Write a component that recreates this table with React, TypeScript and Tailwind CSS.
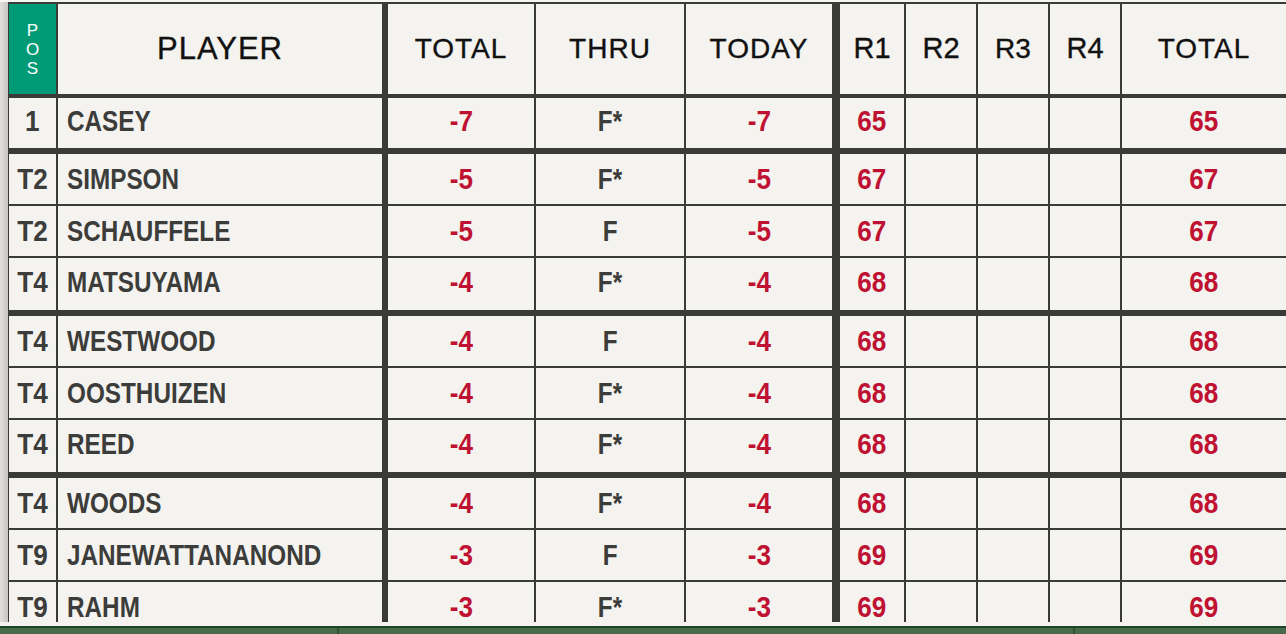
import React from "react";

type Row = {
  pos: string;
  name: string;
  total: string;
  thru: string;
  today: string;
  r1: string;
  sum: string;
  groupEnd?: boolean;
};

const ROWS: Row[] = [
  { pos: "1", name: "CASEY", total: "-7", thru: "F*", today: "-7", r1: "65", sum: "65", groupEnd: true },
  { pos: "T2", name: "SIMPSON", total: "-5", thru: "F*", today: "-5", r1: "67", sum: "67" },
  { pos: "T2", name: "SCHAUFFELE", total: "-5", thru: "F", today: "-5", r1: "67", sum: "67" },
  { pos: "T4", name: "MATSUYAMA", total: "-4", thru: "F*", today: "-4", r1: "68", sum: "68", groupEnd: true },
  { pos: "T4", name: "WESTWOOD", total: "-4", thru: "F", today: "-4", r1: "68", sum: "68" },
  { pos: "T4", name: "OOSTHUIZEN", total: "-4", thru: "F*", today: "-4", r1: "68", sum: "68" },
  { pos: "T4", name: "REED", total: "-4", thru: "F*", today: "-4", r1: "68", sum: "68", groupEnd: true },
  { pos: "T4", name: "WOODS", total: "-4", thru: "F*", today: "-4", r1: "68", sum: "68" },
  { pos: "T9", name: "JANEWATTANANOND", total: "-3", thru: "F", today: "-3", r1: "69", sum: "69" },
  { pos: "T9", name: "RAHM", total: "-3", thru: "F*", today: "-3", r1: "69", sum: "69" },
];

// Column boxes: width includes the right-hand rule
const COL = {
  pos: "w-[49px] border-r-2",
  player: "w-[330px] border-r-[6px]",
  total: "w-[148px] border-r-2",
  thru: "w-[150px] border-r-2",
  today: "w-[154px] border-r-[8px]",
  r1: "w-[66px] border-r-2",
  r: "w-[72px] border-r-2",
  sum: "flex-1",
};

const cell = "h-full shrink-0 border-[#3a3a38] flex items-center justify-center";
const headFont =
  "font-['Liberation_Sans',Arial,sans-serif] text-[28px] tracking-[1px] text-[#111] [-webkit-text-stroke:0.35px_#111]";
const bodyFont = "font-['Liberation_Sans',Arial,sans-serif] font-bold text-[30px] leading-none";

// condensed look: Arial bold squeezed like Arial Narrow
function Narrow({ children, left }: { children: React.ReactNode; left?: boolean }) {
  return (
    <span className={`inline-block whitespace-nowrap scale-x-[0.81] ${left ? "origin-left" : "origin-center"}`}>
      {children}
    </span>
  );
}

function Num({ children }: { children: React.ReactNode }) {
  return <span className="inline-block whitespace-nowrap scale-x-[0.87] origin-center">{children}</span>;
}

function Header() {
  return (
    <div className="flex h-[94px] shrink-0 border-b-4 border-[#3a3a38]">
      <div className={`${cell} ${COL.pos} bg-[#009b76]`}>
        <div className="flex flex-col items-center font-['Liberation_Sans',Arial,sans-serif] text-[17px] leading-[19px] text-white">
          <span>P</span>
          <span>O</span>
          <span>S</span>
        </div>
      </div>
      <div className={`${cell} ${COL.player} ${headFont} text-[31px]`}>PLAYER</div>
      <div className={`${cell} ${COL.total} ${headFont}`}>TOTAL</div>
      <div className={`${cell} ${COL.thru} ${headFont}`}>THRU</div>
      <div className={`${cell} ${COL.today} ${headFont}`}>TODAY</div>
      <div className={`${cell} ${COL.r1} ${headFont} tracking-normal text-[29px]`}>R1</div>
      <div className={`${cell} ${COL.r} ${headFont} tracking-normal text-[29px]`}>R2</div>
      <div className={`${cell} ${COL.r} ${headFont} tracking-normal text-[25px]`}>R3</div>
      <div className={`${cell} ${COL.r} ${headFont} tracking-normal text-[29px]`}>R4</div>
      <div className={`${cell} ${COL.sum} ${headFont}`}>TOTAL</div>
    </div>
  );
}

function Line({ row, first }: { row: Row; first: boolean }) {
  const h = row.groupEnd
    ? first
      ? "h-[56px] border-b-[6px]"
      : "h-[58px] border-b-[6px]"
    : "h-[52px] border-b-2";
  // last row of a group is 2px taller; keep its text at the same height
  const lift = row.groupEnd ? "pb-1" : "";
  const red = `text-[#bf1131] ${lift}`;
  const ink = `text-[#3c3c3a] ${lift}`;
  return (
    <div className={`flex shrink-0 border-[#3a3a38] ${h} ${bodyFont}`}>
      <div className={`${cell} ${COL.pos} ${ink}`}>
        <Num>{row.pos}</Num>
      </div>
      <div className={`${cell} ${COL.player} ${ink} justify-start pl-[9px]`}>
        <Narrow left>{row.name}</Narrow>
      </div>
      <div className={`${cell} ${COL.total} ${red}`}>
        <Num>{row.total}</Num>
      </div>
      <div className={`${cell} ${COL.thru} ${ink}`}>
        <Narrow>{row.thru}</Narrow>
      </div>
      <div className={`${cell} ${COL.today} ${red}`}>
        <Num>{row.today}</Num>
      </div>
      <div className={`${cell} ${COL.r1} ${red}`}>
        <Num>{row.r1}</Num>
      </div>
      <div className={`${cell} ${COL.r}`} />
      <div className={`${cell} ${COL.r}`} />
      <div className={`${cell} ${COL.r}`} />
      <div className={`${cell} ${COL.sum} ${red}`}>
        <Num>{row.sum}</Num>
      </div>
    </div>
  );
}

export default function App() {
  return (
    <div className="w-[1286px] h-[634px] overflow-hidden bg-[#f4f3ef] flex flex-col">
      <div className="h-[2px] shrink-0 bg-[#f6f5f2]" />
      <div className="flex h-[620px] shrink-0">
        <div className="w-[8px] shrink-0 bg-linear-to-r from-[#e2e0dc] to-[#c8c5c1]" />
        <div className="flex-1 flex flex-col overflow-hidden border-t-2 border-l border-[#3a3a38]">
          <Header />
          {ROWS.map((r, i) => (
            <Line key={r.name} row={r} first={i === 0} />
          ))}
        </div>
      </div>
      <div className="h-[4px] shrink-0" />
      <div className="h-[8px] shrink-0 flex border-t-2 border-[#1d4426] bg-[#476b4a]">
        <div className="w-[339px] shrink-0 border-r-2 border-[#2f5234]" />
        <div className="w-[736px] shrink-0 border-r-2 border-[#2f5234]" />
        <div className="flex-1" />
      </div>
    </div>
  );
}
